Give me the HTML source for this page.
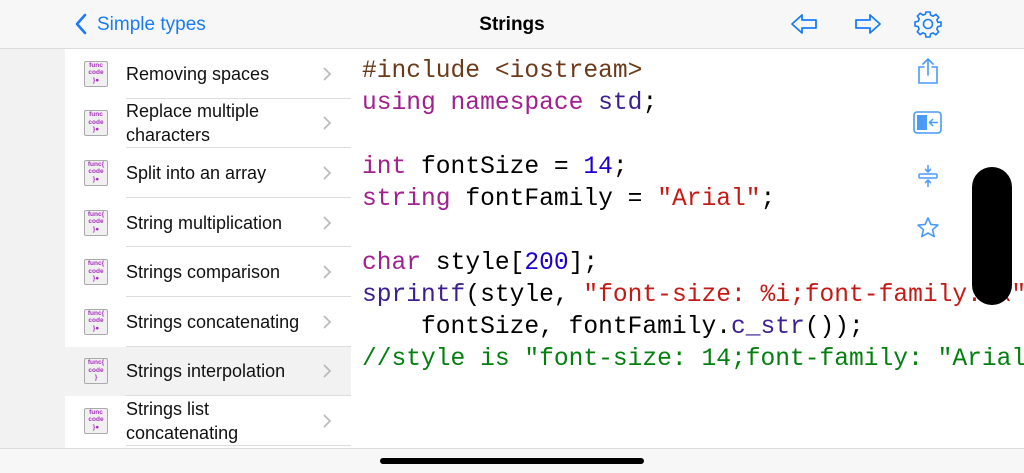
<!DOCTYPE html>
<html><head><meta charset="utf-8"><style>
body{margin:0;width:1024px;height:472px;overflow:hidden;background:#fff;font-family:"Liberation Sans",sans-serif;position:relative}
.hdr{position:absolute;left:0;top:0;width:1024px;height:48px;background:#f7f7f7;border-bottom:1px solid #dcdcdc}
.back{position:absolute;left:97px;top:14px;font-size:19px;color:#1a7cf5}
.title{position:absolute;left:0;width:1024px;top:14px;text-align:center;font-size:19px;font-weight:bold;color:#000}
.strip{position:absolute;left:0;top:49px;width:65px;height:399px;background:#f2f2f2}
.list{position:absolute;left:65px;top:49px;width:286px}
.row{position:relative;height:49.6px;background:#fff}
.row.sel{background:#f2f2f2}
.row .t{position:absolute;left:61px;top:50%;transform:translateY(-50%);font-size:18px;line-height:24px;color:#111}
.row .ch{position:absolute;left:258px;top:50%;transform:translateY(-50%)}
.row:after{content:"";position:absolute;left:61px;right:0;bottom:0;height:1px;background:#ddd}
.ic{position:absolute;left:19px;top:50%;transform:translateY(-50%);width:22px;height:24px;background:#f0f0f0;border:1px solid #aaa;border-radius:2px;font-size:6.5px;line-height:7.5px;color:#a62fbf;text-align:center;font-weight:bold;overflow:hidden}
.wrap{position:absolute;left:0;top:0;width:1024px;height:472px;overflow:hidden}
.code{position:absolute;left:362px;top:56px;font-family:"Liberation Mono",monospace;font-size:24.6px;line-height:32px;white-space:pre;color:#000}
.k{color:#a0208e}.s{color:#c41a16}.n{color:#1c00cf}.f{color:#3b1f8f}.c{color:#037f0f}.p{color:#6b3a1a}
.bot{position:absolute;left:0;top:448px;width:1024px;height:24px;background:#f7f7f7;border-top:1px solid #dcdcdc}
.home{position:absolute;left:380px;top:458px;width:264px;height:6px;border-radius:3px;background:#000}
.pill{position:absolute;left:972px;top:167px;width:40px;height:138px;border-radius:20px;background:#000}
</style></head><body>
<div class="hdr">
<svg style="position:absolute;left:74px;top:13px" width="14" height="22"><path d="M11 2 L3 11 L11 20" fill="none" stroke="#1a7cf5" stroke-width="2.6" stroke-linecap="round" stroke-linejoin="round"/></svg>
<div class="back">Simple types</div>
<div class="title">Strings</div>
<svg style="position:absolute;left:790px;top:12px" width="28" height="24"><path d="M2 12 L12 3 L12 8 L26 8 L26 16 L12 16 L12 21 Z" fill="none" stroke="#1a7cf5" stroke-width="1.8" stroke-linejoin="round"/></svg>
<svg style="position:absolute;left:854px;top:12px" width="28" height="24"><path d="M26 12 L16 3 L16 8 L2 8 L2 16 L16 16 L16 21 Z" fill="none" stroke="#1a7cf5" stroke-width="1.8" stroke-linejoin="round"/></svg>
<svg style="position:absolute;left:914px;top:10px" width="28" height="28" viewBox="0 0 28 28"><g fill="none" stroke="#1a7cf5" stroke-width="1.6"><circle cx="14" cy="14" r="4.5"/><path d="M12 2h4l.7 3.2 2.4 1 2.8-1.8 2.8 2.8-1.8 2.8 1 2.4L27 12v4l-3.2.7-1 2.4 1.8 2.8-2.8 2.8-2.8-1.8-2.4 1L16 27h-4l-.7-3.2-2.4-1-2.8 1.8-2.8-2.8 1.8-2.8-1-2.4L1 16v-4l3.2-.7 1-2.4L3.4 6.1l2.8-2.8 2.8 1.8 2.4-1z"/></g></svg>
</div>
<div class="strip"></div>
<div class="list">
<div class="row"><div class="ic">func<br>code<br>}●</div><div class="t">Removing spaces</div><svg class="ch" width="9" height="14"><path d="M1 1l6 6-6 6" fill="none" stroke="#bbb" stroke-width="1.8"/></svg></div>
<div class="row"><div class="ic">func<br>code<br>}●</div><div class="t">Replace multiple<br>characters</div><svg class="ch" width="9" height="14"><path d="M1 1l6 6-6 6" fill="none" stroke="#bbb" stroke-width="1.8"/></svg></div>
<div class="row"><div class="ic">func{<br>code<br>}●</div><div class="t">Split into an array</div><svg class="ch" width="9" height="14"><path d="M1 1l6 6-6 6" fill="none" stroke="#bbb" stroke-width="1.8"/></svg></div>
<div class="row"><div class="ic">func{<br>code<br>}●</div><div class="t">String multiplication</div><svg class="ch" width="9" height="14"><path d="M1 1l6 6-6 6" fill="none" stroke="#bbb" stroke-width="1.8"/></svg></div>
<div class="row"><div class="ic">func{<br>code<br>}●</div><div class="t">Strings comparison</div><svg class="ch" width="9" height="14"><path d="M1 1l6 6-6 6" fill="none" stroke="#bbb" stroke-width="1.8"/></svg></div>
<div class="row"><div class="ic">func{<br>code<br>}●</div><div class="t">Strings concatenating</div><svg class="ch" width="9" height="14"><path d="M1 1l6 6-6 6" fill="none" stroke="#bbb" stroke-width="1.8"/></svg></div>
<div class="row sel"><div class="ic">func{<br>code<br>}</div><div class="t">Strings interpolation</div><svg class="ch" width="9" height="14"><path d="M1 1l6 6-6 6" fill="none" stroke="#bbb" stroke-width="1.8"/></svg></div>
<div class="row"><div class="ic">func<br>code<br>}●</div><div class="t">Strings list<br>concatenating</div><svg class="ch" width="9" height="14"><path d="M1 1l6 6-6 6" fill="none" stroke="#bbb" stroke-width="1.8"/></svg></div>
</div>
<div class="wrap"><div class="code"><span class="p">#include &lt;iostream&gt;</span>
<span class="k">using namespace</span> <span class="f">std</span>;

<span class="k">int</span> fontSize = <span class="n">14</span>;
<span class="k">string</span> fontFamily = <span class="s">"Arial"</span>;

<span class="k">char</span> style[<span class="n">200</span>];
<span class="f">sprintf</span>(style, <span class="s">"font-size: %i;font-family: \"</span>
    fontSize, fontFamily.<span class="f">c_str</span>());
<span class="c">//style is "font-size: 14;font-family: "Arial</span></div></div>
<svg style="position:absolute;left:916px;top:57px" width="24" height="28"><g fill="none" stroke="#4a9af7" stroke-width="1.6" stroke-linecap="round"><path d="M8 10H3v16h18V10h-5"/><path d="M12 18V2M7 7l5-5 5 5"/></g></svg>
<svg style="position:absolute;left:913px;top:111px" width="30" height="24"><rect x="1" y="1" width="27" height="21" rx="3" fill="none" stroke="#4a9af7" stroke-width="1.6"/><rect x="4" y="4" width="10" height="15" fill="#4a9af7"/><path d="M25 11.5h-8M20 8l-3.5 3.5L20 15" fill="none" stroke="#4a9af7" stroke-width="1.5"/></svg>
<svg style="position:absolute;left:916px;top:164px" width="24" height="24"><g fill="none" stroke="#4a9af7" stroke-width="1.5"><path d="M12 1v7M9 5l3 3 3-3M12 23v-7M9 19l3-3 3 3"/><rect x="3" y="10" width="18" height="4" rx="1"/></g></svg>
<svg style="position:absolute;left:916px;top:216px" width="24" height="24"><path d="M12 2l2.9 6.5 7 .6-5.3 4.6 1.6 6.9L12 17l-6.2 3.6 1.6-6.9L2.1 9.1l7-.6z" fill="none" stroke="#4a9af7" stroke-width="1.6" stroke-linejoin="round"/></svg>
<div class="pill"></div>
<div class="bot"></div>
<div class="home"></div>
</body></html>
